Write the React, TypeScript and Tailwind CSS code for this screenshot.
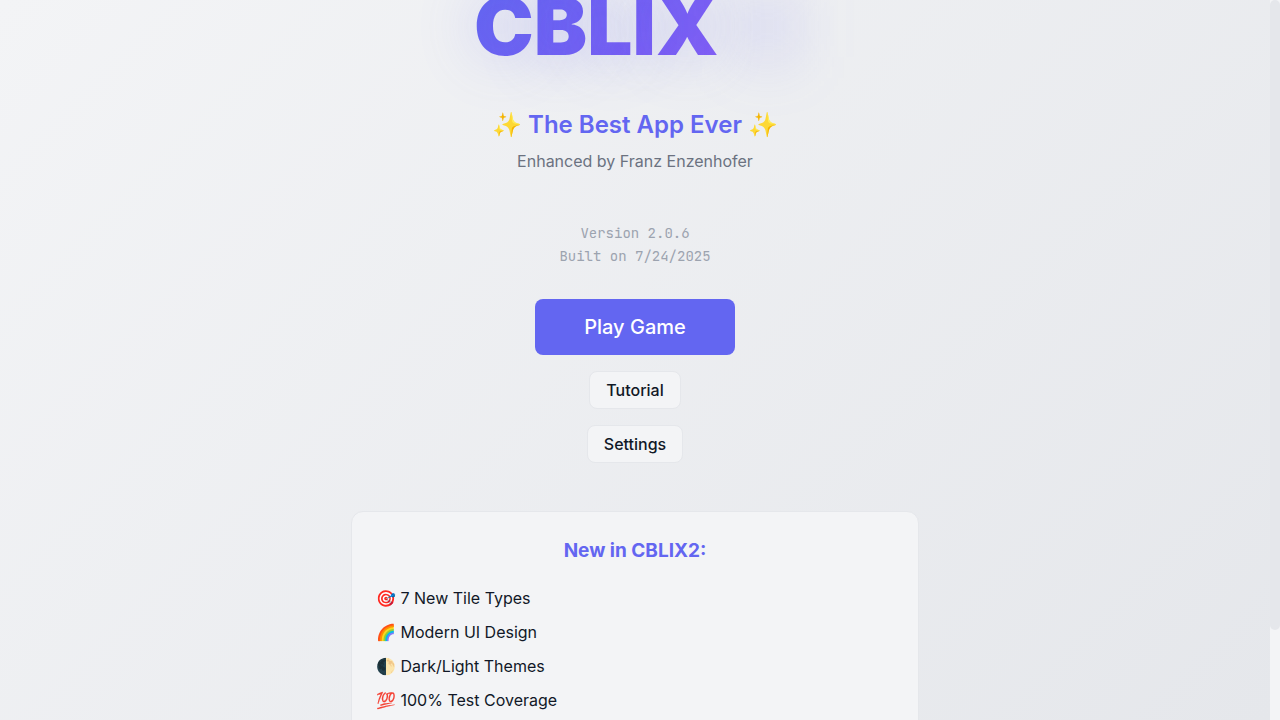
const features = ['🎯 7 New Tile Types', '🌈 Modern UI Design', '🌓 Dark/Light Themes', '💯 100% Test Coverage'];

const secondaryButton =
  'mt-4 h-[38px] shrink-0 rounded-lg border border-[#e5e7eb] bg-[#f3f4f6] px-4 font-medium';

export default function App() {
  return (
    <div className="flex h-screen overflow-hidden bg-[#f3f4f6] font-['Inter',sans-serif] text-[#111827]">
      <main className="flex min-w-0 flex-1 flex-col items-center overflow-hidden bg-linear-[135deg] from-[#f3f4f6] to-[#e5e7eb] px-8">
        <h1 className="-mt-[22px] flex w-[322px] shrink-0 items-center bg-linear-[135deg] from-[#6366f1] to-[#8b5cf6] bg-clip-text text-[80px] leading-[96px] font-black text-transparent [text-shadow:0_0_60px_rgba(99,102,241,0.3)]">
          CBLIX
          <span aria-hidden="true" className="ml-6 h-16 w-12 bg-[#6366f1]/20 blur-[30px]" />
        </h1>
        <p className="mt-[34px] shrink-0 text-2xl leading-[34px] font-semibold text-[#6366f1]">✨ The Best App Ever ✨</p>
        <p className="mt-[7px] shrink-0 text-base text-[#6b7280]">Enhanced by Franz Enzenhofer</p>
        <div className="mt-[49px] shrink-0 text-center font-['JetBrains_Mono','Liberation_Mono',monospace] text-sm leading-[23px] text-[#9ca3af]">
          <p>Version 2.0.6</p>
          <p>Built on 7/24/2025</p>
        </div>
        <button className="mt-[31px] h-14 w-50 shrink-0 rounded-lg bg-[#6366f1] text-xl font-medium text-white">Play Game</button>
        <button className={secondaryButton}>Tutorial</button>
        <button className={secondaryButton}>Settings</button>
        <section className="mt-12 w-full max-w-[568px] shrink-0 rounded-xl border border-[#e5e7eb] bg-[#f3f4f6] p-6">
          <h2 className="text-center text-[19px] leading-[30px] font-bold text-[#6366f1]">New in CBLIX2:</h2>
          <ul className="mt-[15px]">
            {features.map((f) => <li key={f} className="py-1 leading-[26px]">{f}</li>)}
          </ul>
        </section>
      </main>
      <div className="w-2.5 shrink-0 bg-[#f3f4f6]"><div className="h-[87.5%] rounded-full bg-[#e5e7eb]" /></div>
    </div>
  );
}
